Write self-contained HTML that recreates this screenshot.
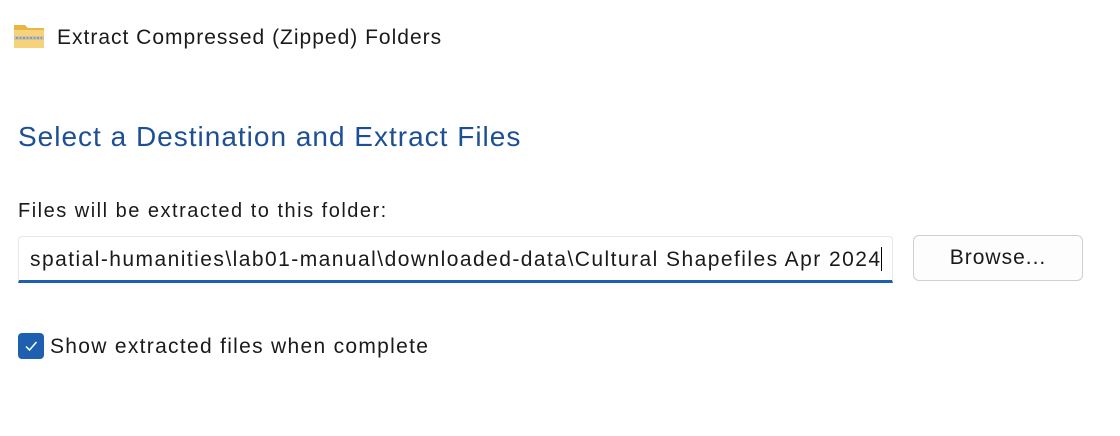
<!DOCTYPE html>
<html><head><style>
body{margin:0;width:1120px;height:436px;background:#fff;font-family:"Liberation Sans",sans-serif;color:#1a1a1a;position:relative;overflow:hidden}
.a{position:absolute;white-space:nowrap}
</style></head><body>
<svg class="a" style="left:13px;top:22px" width="32" height="28" viewBox="0 0 32 28">
<path d="M1 3 h11 l3 3 h16 v20 h-30z" fill="#e9b646"/>
<rect x="1" y="8" width="30" height="18" fill="#f6d27a"/>
<rect x="1" y="14" width="30" height="4" fill="#c9c3b4"/>
<path d="M3 16 h26" stroke="#8a8a8a" stroke-width="1.5" stroke-dasharray="2 1.5"/>
</svg>
<div class="a" style="left:57px;top:26px;font-size:21px;letter-spacing:1px">Extract Compressed (Zipped) Folders</div>
<div class="a" style="left:18px;top:121px;font-size:28px;letter-spacing:1px;color:#1c4f94">Select a Destination and Extract Files</div>
<div class="a" style="left:18px;top:200px;font-size:20px;letter-spacing:1.5px">Files will be extracted to this folder:</div>
<div class="a" style="left:18px;top:236px;width:875px;height:47px;border:1px solid #e6e6e6;border-bottom:3px solid #1f5fb0;border-radius:4px 4px 0 0;box-sizing:border-box"></div>
<div class="a" style="left:30px;top:247px;font-size:21px;letter-spacing:1.45px">spatial-humanities\lab01-manual\downloaded-data\Cultural Shapefiles Apr 2024<span style="display:inline-block;width:1.5px;height:24px;background:#000;vertical-align:-5px;margin-left:-1px"></span></div>
<div class="a" style="left:913px;top:235px;width:170px;height:46px;border:1px solid #cfcfcf;border-radius:6px;box-sizing:border-box;background:#fdfdfd;text-align:center;line-height:44px;font-size:21px;letter-spacing:1px">Browse...</div>
<div class="a" style="left:18px;top:333px;width:26px;height:26px;background:#1f5fb0;border-radius:4px">
<svg width="26" height="26"><path d="M8 13.5 l3.5 3.5 l7 -8" stroke="#fff" stroke-width="1.5" fill="none"/></svg></div>
<div class="a" style="left:50px;top:335px;font-size:21px;letter-spacing:1.3px">Show extracted files when complete</div>
</body></html>
